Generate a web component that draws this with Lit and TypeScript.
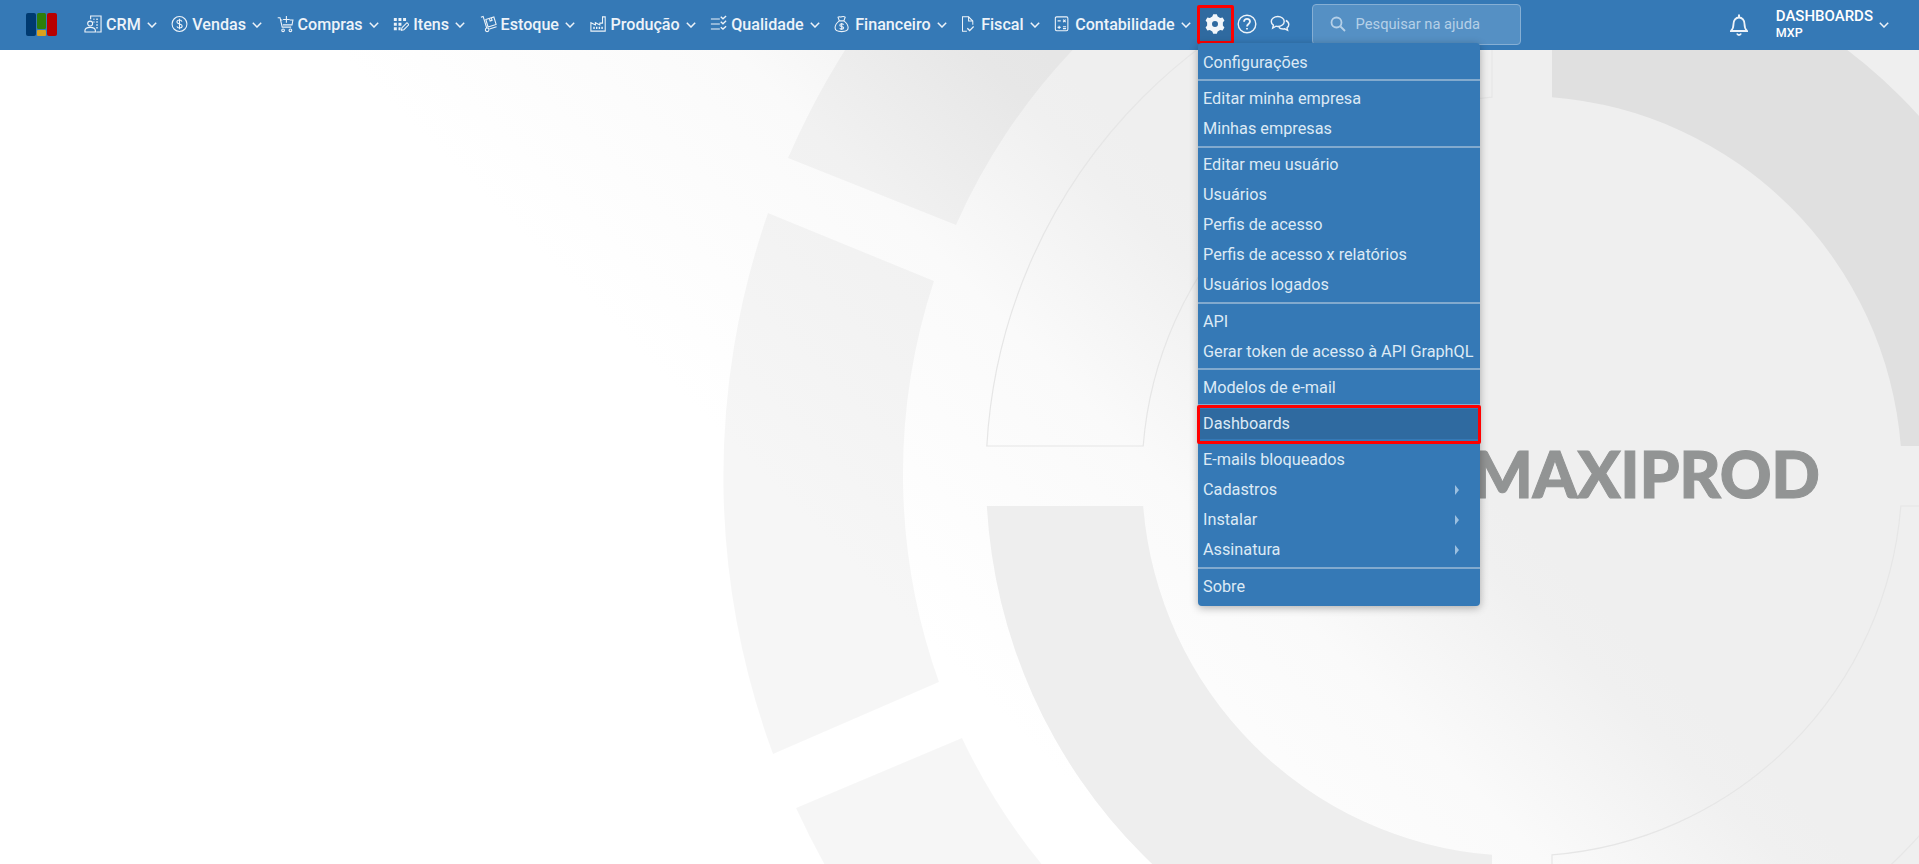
import { LitElement, html, css, svg } from 'lit';
import { customElement } from 'lit/decorators.js';

const cx = 1522;
const cy = 476;

// cog with trapezoid teeth, outer/inner radii on a 24 box
function cogPath(): string {
  const pts: string[] = [];
  const teeth = 6;
  for (let i = 0; i < teeth; i++) {
    const a = (i * Math.PI * 2) / teeth - Math.PI / 2;
    const step = Math.PI / teeth;
    const list: [number, number][] = [
      [9.6, a - step * 0.66],
      [12, a - step * 0.34],
      [12, a + step * 0.34],
      [9.6, a + step * 0.66],
    ];
    for (const [r, t] of list) {
      pts.push(`${(12 + r * Math.cos(t)).toFixed(2)} ${(12 + r * Math.sin(t)).toFixed(2)}`);
    }
  }
  return `M${pts.join('L')}Z M12 8.4a3.6 3.6 0 1 0 0 7.2a3.6 3.6 0 1 0 0-7.2Z`;
}

const ICONS: Record<string, unknown> = {
  crm: svg`<circle cx="6.5" cy="9.5" r="2.6"/><path d="M1 18.5v-1.6c0-2.2 2.4-3.4 5.5-3.4s5.5 1.2 5.5 3.4v1.6Z"/><path d="M7 5V1.5h11v17h-5"/><path d="M10 5h1M13 5h1.5M10 8h1M13 8h1.5M13 11h1.5M13 14h1.5" stroke-width="1.6"/>`,
  vendas: svg`<circle cx="9.5" cy="10" r="8.3"/><path d="M12.3 7.4c-.4-1.2-1.5-1.8-2.8-1.8-1.6 0-2.9.9-2.9 2.2 0 3 5.9 1.5 5.9 4.5 0 1.3-1.3 2.2-3 2.2-1.4 0-2.5-.7-2.9-1.9M9.5 4v12"/>`,
  compras: svg`<path d="M.8 3h2.6l2.4 10.5h10"/><path d="M4 5.500h2M6.500 11h10.300l1-5.500h-3.500"/><path d="M10.500 1v7.500M6.800 5h7.400"/><circle cx="6.800" cy="17" r="1.500"/><circle cx="15" cy="17" r="1.500"/>`,
  itens: svg`<path d="M1 3h3.500v3.500H1ZM6.500 3H10v3.500H6.500ZM12 3h3.500v3.500H12ZM1 8.500h3.500V12H1ZM6.500 8.500H10V12H6.500ZM1 14h3.500v3.500H1ZM6.500 14H9v3.500H6.500Z" fill="currentColor" stroke="none"/><path d="M10 17.500l.6-3 6-6 2.300 2.300-6 6Z"/>`,
  estoque: svg`<path d="M1 2.500l2.500-1 4 13"/><circle cx="8" cy="16.500" r="2"/><path d="M10.500 15.500l8-2.500"/><path d="M6.500 5l9-2.800 2.500 8.300-9 2.800Z"/><path d="M10.500 4l.8 2.600 2.200-.7-.8-2.600"/>`,
  producao: svg`<path d="M1 18V8.500l5 2.600V8.500l5 2.600V9h3V2h3v16Z"/><path d="M4.500 13v2.500M7.500 13v2.500M10.500 13v2.500M13.500 13v2.500" stroke-width="1.600"/>`,
  qualidade: svg`<path d="M1 4.500h10M1 10h10M1 15.500h10"/><path d="M12 2l2.500 2.200L18 1M12 7.500l2.500 2.200 3.500-3.200M12 13.500l2.500 2.200 3.500-3.200" stroke-width="1.500"/>`,
  financeiro: svg`<path d="M6 6.500c-2.800 2-4.800 5-4.800 7.800 0 3 2.300 4.200 7.300 4.200s7.300-1.200 7.300-4.200c0-2.800-2-5.800-4.800-7.800Z"/><path d="M6 6.500L4.500 2.300c1.300-.9 2.400.3 4-.3s2.700-.6 4 .3L11 6.500"/><path d="M10.700 10.800c-.4-.7-1.200-1-2.100-1-1.200 0-2.100.6-2.100 1.500 0 2 4.300 1 4.300 3 0 .9-1 1.500-2.200 1.500-1 0-1.800-.4-2.200-1.100M8.600 8.800v8"/>`,
  fiscal: svg`<path d="M7 18.500H1.800V1.500H9l5 5v4.500"/><path d="M9 1.500v5h5"/><path d="M7.500 15l2.800 2.800 4.700-4.800" stroke-width="1.500"/>`,
  contabilidade: svg`<rect x="1.500" y="2" width="14" height="15.500" rx="1.500"/><path d="M4 6.500h3.500M5.750 12v3.500M4 13.750h3.500M10.200 5l2.800 3M13 5l-2.800 3M10 13h3.500M10 15.200h3.500"/>`,
};

interface NavItem {
  label: string;
  icon: string;
  width: number;
}

const NAV: NavItem[] = [
  { label: 'CRM', icon: 'crm', width: 18 },
  { label: 'Vendas', icon: 'vendas', width: 17 },
  { label: 'Compras', icon: 'compras', width: 17 },
  { label: 'Itens', icon: 'itens', width: 16 },
  { label: 'Estoque', icon: 'estoque', width: 17 },
  { label: 'Produção', icon: 'producao', width: 17 },
  { label: 'Qualidade', icon: 'qualidade', width: 17 },
  { label: 'Financeiro', icon: 'financeiro', width: 17 },
  { label: 'Fiscal', icon: 'fiscal', width: 16 },
  { label: 'Contabilidade', icon: 'contabilidade', width: 17 },
];

// null is a divider
const MENU: ({ label: string; sub?: boolean; marked?: boolean } | null)[] = [
  { label: 'Configurações' },
  null,
  { label: 'Editar minha empresa' },
  { label: 'Minhas empresas' },
  null,
  { label: 'Editar meu usuário' },
  { label: 'Usuários' },
  { label: 'Perfis de acesso' },
  { label: 'Perfis de acesso x relatórios' },
  { label: 'Usuários logados' },
  null,
  { label: 'API' },
  { label: 'Gerar token de acesso à API GraphQL' },
  null,
  { label: 'Modelos de e-mail' },
  null,
  { label: 'Dashboards', marked: true },
  null,
  { label: 'E-mails bloqueados' },
  { label: 'Cadastros', sub: true },
  { label: 'Instalar', sub: true },
  { label: 'Assinatura', sub: true },
  null,
  { label: 'Sobre' },
];

const chevron = html`<svg class="chev" viewBox="0 0 10 6"><path d="M.8 .8L5 5l4.200-4.200"/></svg>`;

@customElement('app-root')
export class AppRoot extends LitElement {
  static styles = css`
    :host {
      display: block;
      position: relative;
      height: 864px;
      overflow: hidden;
      background: #fff;
      font-family: Roboto, 'Liberation Sans', sans-serif;
    }
    .backdrop {
      position: absolute;
      left: 0;
      top: 0;
    }
    .wordmark {
      font-family: Lato, 'Open Sans', sans-serif;
      font-weight: 900;
      font-size: 64px;
      fill: #929494;
      stroke: #929494;
      stroke-width: 1;
    }
    header {
      position: relative;
      display: flex;
      align-items: center;
      height: 50px;
      padding: 0 30px 2px 26px;
      box-sizing: border-box;
      background: #3579b6;
      color: #edf3f9;
    }
    .logo {
      display: block;
      width: 31px;
      height: 23px;
      margin-right: 27px;
    }
    nav {
      display: flex;
      align-items: center;
      gap: 14.6px;
    }
    .nav-item {
      display: flex;
      align-items: center;
      font-size: 16.1px;
      font-weight: 500;
      white-space: nowrap;
    }
    .nav-icon {
      height: 20px;
      margin-right: 4px;
      fill: none;
      stroke: currentColor;
      stroke-width: 1.2;
    }
    .chev {
      width: 10px;
      height: 6px;
      margin-left: 6px;
      margin-top: 2px;
      fill: none;
      stroke: currentColor;
      stroke-width: 1.5;
    }
    .tools {
      display: flex;
      align-items: center;
      margin-left: 5px;
    }
    .gear-cell {
      display: flex;
      align-items: center;
      justify-content: center;
      box-sizing: border-box;
      width: 37px;
      height: 39px;
      margin-left: 1px;
      border: 3px solid #f00;
      border-radius: 2px;
      background: #2f6aa0;
    }
    .gear {
      width: 20px;
      height: 20px;
      fill: #f2f6fa;
    }
    .tool-icon {
      width: 20px;
      height: 20px;
      fill: none;
      stroke: currentColor;
      stroke-width: 1.4;
    }
    .help {
      margin-left: 3px;
    }
    .chat {
      margin-left: 13px;
    }
    .search {
      display: flex;
      align-items: center;
      box-sizing: border-box;
      width: 209px;
      height: 41px;
      margin-left: 22px;
      padding-left: 17px;
      border: 1px solid #86afd4;
      border-radius: 4px;
      background: #5590c4;
      color: #b5d0e8;
      font-size: 14.7px;
    }
    .search svg {
      width: 16px;
      height: 16px;
      margin-right: 10px;
      fill: none;
      stroke: #b5d0e8;
      stroke-width: 1.8;
    }
    .right {
      display: flex;
      align-items: center;
      margin-left: auto;
    }
    .bell {
      width: 18px;
      height: 23px;
      margin-right: 28px;
      fill: none;
      stroke: #edf3f9;
      stroke-width: 1.8;
    }
    .account {
      display: flex;
      flex-direction: column;
      color: #fff;
      font-weight: 500;
    }
    .account b {
      font-weight: 500;
      font-size: 15px;
      line-height: 17px;
    }
    .account span {
      font-size: 12.5px;
      line-height: 15px;
    }
    .menu {
      position: absolute;
      left: 1198px;
      top: 43px;
      width: 282px;
      box-sizing: border-box;
      padding: 4.4px 0 4.6px;
      border-radius: 4px;
      background: #3579b6;
      box-shadow: 0 2px 8px rgba(0, 0, 0, 0.3);
      color: #dce9f5;
      font-size: 16.25px;
    }
    .menu-item {
      position: relative;
      display: flex;
      align-items: center;
      justify-content: space-between;
      height: 30px;
      padding: 0 21px 0 5px;
      white-space: nowrap;
    }
    .menu-item.marked {
      background: #2f6aa0;
    }
    .menu-item.marked::after {
      content: '';
      position: absolute;
      inset: -4px -1px -5px -1px;
      border: 3px solid #f00;
      border-radius: 2px;
    }
    .arrow {
      border-left: 4px solid #9cc0e0;
      border-top: 5px solid transparent;
      border-bottom: 5px solid transparent;
    }
    .divider {
      height: 2px;
      margin: 2px 0 2.25px;
      background: #82aace;
    }
  `;

  private renderBackdrop() {
    const ring = (r: number, x: number, y: number) => {
      // point of a quadrant corner, with the 30px half gap of the cross
      return `${cx + x * Math.sqrt(r * r - 900)} ${cy + y * 30}`;
    };
    const topOf = (r: number, sx: number, sy: number) => `${cx + sx * 30} ${cy + sy * Math.sqrt(r * r - 900)}`;
    const quad = (sx: number, sy: number, r1 = 380, r2 = 536) => {
      const sweepOut = sx * sy > 0 ? 1 : 0;
      const sweepIn = sweepOut ? 0 : 1;
      return `M${ring(r2, sx, sy)}A${r2} ${r2} 0 0 ${sweepOut} ${topOf(r2, sx, sy)}L${topOf(r1, sx, sy)}A${r1} ${r1} 0 0 ${sweepIn} ${ring(r1, sx, sy)}Z`;
    };
    const R1 = 618;
    const R2 = 800;
    return html`<svg class="backdrop" width="1919" height="864" viewBox="0 0 1919 864">
      <defs>
        <linearGradient id="wash" gradientUnits="userSpaceOnUse" x1="893" y1="607" x2="1247" y2="253">
          <stop offset="0" stop-color="#fff" />
          <stop offset="0.56" stop-color="#fafafa" />
          <stop offset="0.9" stop-color="#f0f0f0" />
          <stop offset="1" stop-color="#efefef" />
        </linearGradient>
      </defs>
      <rect width="1919" height="864" fill="url(#wash)" />
      <g fill="#000" fill-opacity="0.035">
        <path d="M788 158A${R2} ${R2} 0 0 1 1000 -130L1240 -75A${R1} ${R1} 0 0 0 956 225Z" />
        <path d="M768 213A${R2} ${R2} 0 0 0 773 754L939 682A${R1} ${R1} 0 0 1 934 281Z" />
        <path d="M796 808A${R2} ${R2} 0 0 0 1000 1080L1240 1024A${R1} ${R1} 0 0 1 962 738Z" />
      </g>
      <path d=${quad(1, -1)} fill="#e0e0e0" />
      <path d=${quad(-1, 1)} fill="#eee" />
      <path d=${quad(-1, -1)} fill="none" stroke="#e6e6e6" stroke-width="1.2" />
      <path d=${quad(1, 1)} fill="none" stroke="#e6e6e6" stroke-width="1.2" />
      <text class="wordmark" x="1472" y="498" textLength="348" lengthAdjust="spacing">MAXIPROD</text>
    </svg>`;
  }

  render() {
    return html`
      ${this.renderBackdrop()}
      <header>
        <svg class="logo" viewBox="0 0 31 23">
          <rect x="0" y="0" width="10" height="23" rx="2" fill="#003a70" />
          <rect x="11" y="0" width="9" height="16" rx="1.500" fill="#2e7d0a" />
          <rect x="11" y="17" width="9" height="6" rx="1" fill="#d9a01e" />
          <rect x="21" y="0" width="10" height="23" rx="2" fill="#b80000" />
        </svg>
        <nav>
          ${NAV.map(
            (item) => html`<div class="nav-item">
              <svg class="nav-icon" style="width:${item.width}px" viewBox="0 0 19 20">${ICONS[item.icon]}</svg>
              ${item.label}${chevron}
            </div>`,
          )}
        </nav>
        <div class="tools">
          <div class="gear-cell">
            <svg class="gear" viewBox="0 0 24 24"><path fill-rule="evenodd" d=${cogPath()} /></svg>
          </div>
          <svg class="tool-icon help" viewBox="0 0 20 20">
            <circle cx="10" cy="10" r="8.800" />
            <path d="M7 7.800c0-1.800 1.400-2.900 3-2.900s3 1.100 3 2.700c0 2.400-3 2.400-3 4.800" stroke-width="1.800" />
            <path d="M10 14v1.600" stroke-width="1.800" />
          </svg>
          <svg class="tool-icon chat" viewBox="0 0 20 20">
            <path d="M7.800 2.500c-3.600 0-6.500 2.200-6.500 5 0 1.500.8 2.800 2.100 3.700L2.700 14l3.300-1.800c.6.200 1.200.3 1.800.3 3.600 0 6.400-2.200 6.400-5s-2.800-5-6.400-5Z" />
            <path d="M15.800 6.500c1.800.8 3 2.300 3 4 0 1.300-.7 2.500-1.800 3.300l.6 2.500-2.900-1.500c-.5.100-1 .2-1.600.2-1.800 0-3.400-.7-4.300-1.800" />
          </svg>
        </div>
        <div class="search">
          <svg viewBox="0 0 16 16"><circle cx="6.500" cy="6.500" r="5" /><path d="M10.500 10.500l4.500 4.500" /></svg>
          Pesquisar na ajuda
        </div>
        <div class="right">
          <svg class="bell" viewBox="0 0 18 23">
            <path d="M1 18h16c-1.500-1.500-2.500-3-2.500-7 0-3.500-2.200-6.500-5.500-6.500S3.500 7.500 3.500 11c0 4-1 5.500-2.500 7Z" />
            <path d="M9 4.500V1.500" stroke-width="2" />
            <path d="M7 20.500c.4 1 1.100 1.500 2 1.500s1.600-.5 2-1.500" stroke-width="2" />
          </svg>
          <div class="account"><b>DASHBOARDS</b><span>MXP</span></div>
          ${chevron}
        </div>
      </header>
      <div class="menu">
        ${MENU.map((entry) =>
          entry === null
            ? html`<div class="divider"></div>`
            : html`<div class="menu-item ${entry.marked ? 'marked' : ''}">
                ${entry.label}${entry.sub ? html`<span class="arrow"></span>` : ''}
              </div>`,
        )}
      </div>
    `;
  }
}
